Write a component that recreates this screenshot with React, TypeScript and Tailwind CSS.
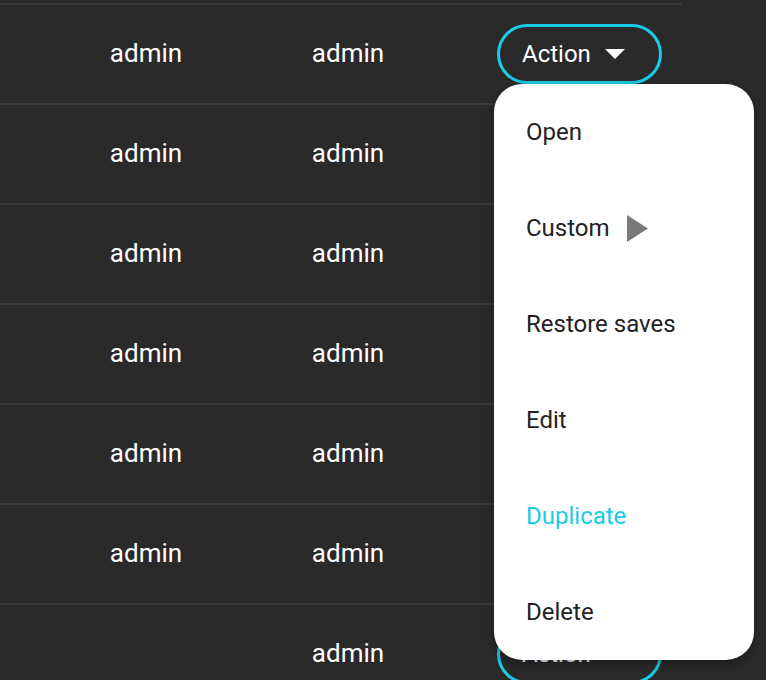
import React from "react";

const rows = [
  { a: "admin", b: "admin" },
  { a: "admin", b: "admin" },
  { a: "admin", b: "admin" },
  { a: "admin", b: "admin" },
  { a: "admin", b: "admin" },
  { a: "admin", b: "admin" },
  { a: "", b: "admin" },
];

const items = ["Open", "Custom", "Restore saves", "Edit", "Duplicate", "Delete"];

function ActionButton() {
  return (
    <div className="w-[165px] h-[60px] rounded-full border-[3px] border-[#1ccbe6] flex items-center pl-[22px] text-white text-[24px]">
      <span>Action</span>
      <svg width="20" height="11" viewBox="0 0 20 11" className="ml-[14px]">
        <polygon points="0,0 20,0 10,10" fill="#ffffff" />
      </svg>
    </div>
  );
}

export default function App() {
  return (
    <div
      className="relative w-[766px] h-[680px] overflow-hidden bg-[#2a2a2a]"
      style={{ fontFamily: "Roboto, 'Noto Sans', sans-serif" }}
    >
      <div className="w-[682px] pt-[3px]">
        <div className="border-t-2 border-[#3a3a3a]">
          {rows.map((r, i) => (
            <div key={i} className="h-[100px] border-b-2 border-[#3a3a3a] flex items-center text-white text-[26px]">
              <div className="w-[292px] text-center pb-[2px]">{r.a}</div>
              <div className="w-[112px] text-center pb-[2px]">{r.b}</div>
              <div className="pl-[93px]">
                <ActionButton />
              </div>
            </div>
          ))}
        </div>
      </div>

      <div className="absolute left-[494px] top-[84px] w-[260px] h-[576px] rounded-[28px] bg-white shadow-[0_4px_12px_rgba(0,0,0,0.35)] flex flex-col">
        {items.map((it) => (
          <div
            key={it}
            className={
              "h-[96px] flex items-center pl-[32px] text-[24px] " +
              (it === "Duplicate" ? "text-[#1ccbe6]" : "text-[#222222]")
            }
          >
            <span>{it}</span>
            {it === "Custom" && (
              <svg width="21" height="27" viewBox="0 0 21 27" className="ml-[17px]">
                <polygon points="0,0 21,13.5 0,27" fill="#7a7a7a" />
              </svg>
            )}
          </div>
        ))}
      </div>
    </div>
  );
}
